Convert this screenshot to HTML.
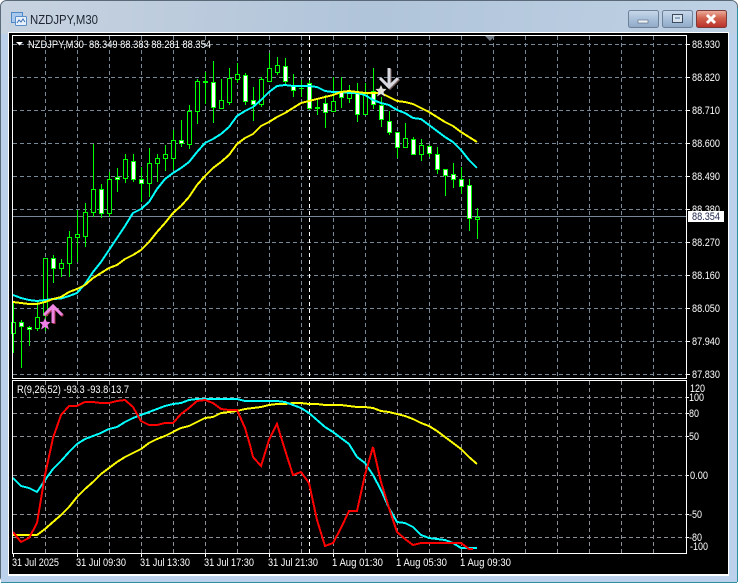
<!DOCTYPE html>
<html><head><meta charset="utf-8"><title>NZDJPY,M30</title>
<style>
html,body{margin:0;padding:0;width:739px;height:584px;overflow:hidden;background:#fff}
svg{display:block;position:absolute;left:0;top:0}
text{font-family:"Liberation Sans",sans-serif;font-size:11px;fill:#fff}
.t{font-size:13px;fill:#1c2530}
</style></head><body>
<svg width="739" height="584" viewBox="0 0 739 584" xmlns="http://www.w3.org/2000/svg">
<defs>
<linearGradient id="tb" x1="0" y1="0" x2="1" y2="0.08"><stop offset="0" stop-color="#c8d3e0"/><stop offset=".5" stop-color="#b0c4da"/><stop offset="1" stop-color="#bfd1e4"/></linearGradient>
<linearGradient id="b1" x1="0" y1="0" x2="0" y2="1"><stop offset="0" stop-color="#c9d8ea"/><stop offset=".5" stop-color="#a9c0da"/><stop offset="1" stop-color="#8fa9c6"/></linearGradient>
<linearGradient id="b2" x1="0" y1="0" x2="0" y2="1"><stop offset="0" stop-color="#ecb0a0"/><stop offset=".45" stop-color="#d2624e"/><stop offset="1" stop-color="#b8302a"/></linearGradient>
</defs>
<!-- window frame -->
<rect x="0.5" y="0.5" width="737" height="582" rx="6" fill="url(#tb)" stroke="#5a6a78"/>
<rect x="1" y="34" width="736" height="548" fill="#bcd2ec"/>
<path d="M0.5 6V578" stroke="#5a6a78"/>
<path d="M1 582.5H737M737.5 8V582" stroke="#2f8ea0" fill="none"/>
<!-- client -->
<rect x="8" y="32" width="721" height="544" fill="#fff"/>
<rect x="9" y="33" width="719" height="541" fill="#000"/>
<!-- icon -->
<rect x="11.5" y="12.5" width="11" height="10" fill="#a9c8ee" stroke="#4f86c6"/>
<rect x="15.5" y="16.5" width="11" height="9" rx="1" fill="#e8f1fb" stroke="#5a8ec8"/>
<path d="M17 23l2-3 2 2 2-3 2 3" stroke="#3a6eb0" fill="none"/>
<text class="t" x="30" y="24" textLength="68" lengthAdjust="spacingAndGlyphs">NZDJPY,M30</text>
<!-- buttons -->
<rect x="628.5" y="10.5" width="30" height="17" rx="2" fill="url(#b1)" stroke="#6d8199"/>
<rect x="638" y="20" width="10" height="3" fill="#eef2f6" stroke="#56677c" stroke-width=".6"/>
<rect x="662.5" y="10.5" width="30" height="17" rx="2" fill="url(#b1)" stroke="#6d8199"/>
<rect x="672.5" y="14.5" width="10" height="8" fill="#d9e3ee" stroke="#3c4c60" stroke-width="1"/>
<rect x="675" y="17" width="5" height="2" fill="#8ea7c2"/>
<rect x="696.5" y="10.5" width="30" height="17" rx="2" fill="url(#b2)" stroke="#7c3a38"/>
<path d="M707 15l8 8M715 15l-8 8" stroke="#fff" stroke-width="3"/>
<!-- grid main -->
<g stroke="#778899" fill="none" stroke-dasharray="4 3" shape-rendering="crispEdges">
<path d="M13 44.5H686M13 77.5H686M13 110.5H686M13 143.5H686M13 176.5H686M13 209.5H686M13 242.5H686M13 275.5H686M13 308.5H686M13 341.5H686M13 374.5H686"/>
<path d="M45.5 36V378M77.5 36V378M109.5 36V378M141.5 36V378M173.5 36V378M205.5 36V378M237.5 36V378M269.5 36V378M333.5 36V378M365.5 36V378M397.5 36V378M429.5 36V378M461.5 36V378M493.5 36V378M525.5 36V378M557.5 36V378M589.5 36V378M621.5 36V378M653.5 36V378M301.5 36V378"/>
<path d="M309.5 36V378" stroke="#fff"/>
</g>
<path d="M13 216.5H686" stroke="#778899" shape-rendering="crispEdges"/>
<!-- wicks -->
<path shape-rendering="crispEdges" fill="none" stroke="#00ff00" d="M13.5 302V353M21.5 320V368M29.5 326V346M37.5 300V331M45.5 258V331M53.5 255V283M61.5 259V277M69.5 231V277M77.5 210V262M85.5 203V247M93.5 144V217M101.5 184V218M109.5 172V217M117.5 168V192M125.5 154V183M133.5 154V182M141.5 167V202M149.5 148V197M157.5 154V182M165.5 145V171M173.5 130V170M181.5 120V147M189.5 105V149M197.5 79V124M205.5 72V104M213.5 61V123M221.5 79V108M229.5 68V105M237.5 63V83M245.5 73V105M253.5 87V121M261.5 77V107M269.5 53V82M277.5 57V75M285.5 58V84M293.5 74V97M301.5 80V97M309.5 80V110M317.5 100V115M325.5 95V128M333.5 77V112M341.5 77V108M349.5 85V103M357.5 83V122M365.5 83V115M373.5 68V109M381.5 97V127M389.5 111V135M397.5 132V158M405.5 123V147M413.5 137V155M421.5 139V161M429.5 145V157M437.5 147V174M445.5 169V196M453.5 163V188M461.5 167V194M469.5 179V231M477.5 208V239"/>
<!-- hollow bodies -->
<g fill="#000" stroke="#00ff00" shape-rendering="crispEdges">
<rect x="11.5" y="322.5" width="4" height="11"/><rect x="35.5" y="317.5" width="4" height="11"/><rect x="43.5" y="258.5" width="4" height="57"/><rect x="59.5" y="263.5" width="4" height="5"/><rect x="67.5" y="237.5" width="4" height="26"/><rect x="75.5" y="234.5" width="4" height="3"/><rect x="83.5" y="212.5" width="4" height="24"/><rect x="91.5" y="189.5" width="4" height="23"/><rect x="107.5" y="179.5" width="4" height="34"/><rect x="123.5" y="159.5" width="4" height="19"/><rect x="147.5" y="163.5" width="4" height="20"/><rect x="155.5" y="158.5" width="4" height="5"/><rect x="163.5" y="154.5" width="4" height="4"/><rect x="171.5" y="140.5" width="4" height="18"/><rect x="187.5" y="111.5" width="4" height="33"/><rect x="195.5" y="81.5" width="4" height="30"/><rect x="219.5" y="100.5" width="4" height="8"/><rect x="227.5" y="78.5" width="4" height="24"/><rect x="235.5" y="74.5" width="4" height="5"/><rect x="259.5" y="79.5" width="4" height="25"/><rect x="267.5" y="68.5" width="4" height="13"/><rect x="275.5" y="65.5" width="4" height="7"/><rect x="331.5" y="101.5" width="4" height="10"/><rect x="347.5" y="92.5" width="4" height="6"/><rect x="363.5" y="92.5" width="4" height="22"/><rect x="403.5" y="138.5" width="4" height="9"/><rect x="419.5" y="145.5" width="4" height="9"/><rect x="475.5" y="217.5" width="4" height="2"/>
</g>
<!-- doji -->
<path shape-rendering="crispEdges" stroke="#00ff00" fill="none" d="M203 81.5h5M203 82.5h5M299 88.5h5M315 107.5h5M315 108.5h5"/>
<!-- white bodies -->
<g fill="#fff" stroke="#00ff00" shape-rendering="crispEdges">
<rect x="19.5" y="322.5" width="4" height="4"/><rect x="27.5" y="327.5" width="4" height="2"/><rect x="51.5" y="258.5" width="4" height="10"/><rect x="99.5" y="189.5" width="4" height="24"/><rect x="115.5" y="177.5" width="4" height="2"/><rect x="131.5" y="161.5" width="4" height="18"/><rect x="139.5" y="179.5" width="4" height="4"/><rect x="179.5" y="140.5" width="4" height="3"/><rect x="211.5" y="82.5" width="4" height="25"/><rect x="243.5" y="75.5" width="4" height="26"/><rect x="251.5" y="100.5" width="4" height="4"/><rect x="283.5" y="66.5" width="4" height="15"/><rect x="291.5" y="86.5" width="4" height="4"/><rect x="307.5" y="83.5" width="4" height="25"/><rect x="323.5" y="103.5" width="4" height="9"/><rect x="339.5" y="92.5" width="4" height="5"/><rect x="355.5" y="92.5" width="4" height="22"/><rect x="371.5" y="91.5" width="4" height="13"/><rect x="379.5" y="105.5" width="4" height="14"/><rect x="387.5" y="121.5" width="4" height="11"/><rect x="395.5" y="132.5" width="4" height="15"/><rect x="411.5" y="139.5" width="4" height="15"/><rect x="427.5" y="146.5" width="4" height="7"/><rect x="435.5" y="154.5" width="4" height="15"/><rect x="443.5" y="169.5" width="4" height="6"/><rect x="451.5" y="174.5" width="4" height="5"/><rect x="459.5" y="179.5" width="4" height="7"/><rect x="467.5" y="185.5" width="4" height="33"/>
</g>
<!-- MAs -->
<polyline shape-rendering="crispEdges" fill="none" stroke="#00ffff" stroke-width="2" points="13,295 21,298 29,300 37,301 45,300 53,299 61,298.5 69,296 77,293 85,284 93,272 101,262 109,250 117,238 125,226 133,213 141,209 149,202 157,189 165,179 173,173 181,168 189,162 197,152 205,143 213,139 221,134 229,127 237,116 245,111 253,107 261,100 269,92 277,86 285,85 293,86 301,86 309,86 317,87 325,91 333,92 341,92 349,93 357,93 365,95 373,100 381,103 389,105 397,110 405,113 413,118 421,119 429,125 437,131 445,137 453,142 461,150 469,160 477,168"/>
<polyline shape-rendering="crispEdges" fill="none" stroke="#ffff00" stroke-width="2" points="13,302 21,303 29,304 37,304 45,302 53,299 61,297 69,292 77,289 85,285 93,278 101,273 109,268 117,265 125,259 133,255 141,250 149,242 157,232 165,223 173,213 181,206 189,197 197,185 205,176 213,168 221,162 229,155 237,144 245,138 253,134 261,126 269,122 277,117 285,113 293,108 301,103 309,101 317,99 325,97 333,95 341,92 349,91 357,92 365,93 373,93 381,93 389,97 397,101 405,102 413,104 421,108 429,112 437,117 445,122 453,126 461,132 469,137 477,142"/>
<!-- arrows & stars -->
<polygon points="45,318 46.7,321.8 50.5,322 47.5,325 49,329.5 45,327 41,329.5 42.5,325 39.5,322 43.3,321.8" fill="#ee7fe6"/>
<path d="M54 324V307M45 316L54 307L63 316" fill="none" stroke="#a8344f" stroke-width="3"/>
<path d="M53 323V306M44 315L53 306L62 315" fill="none" stroke="#ec86e2" stroke-width="3"/>
<polygon points="381,85 382.7,88.8 386.5,89 383.5,92 385,96.5 381,94 377,96.5 378.5,92 375.5,89 379.3,88.8" fill="#e0dcd8"/>
<path d="M390 69V87M381 79L390 88L399 79" fill="none" stroke="#7a6060" stroke-width="3"/>
<path d="M389 68V86M380 78L389 87L398 78" fill="none" stroke="#d8d8e0" stroke-width="3"/>
<!-- main chart border -->
<rect x="12.5" y="35.5" width="674" height="343" fill="none" stroke="#fff" shape-rendering="crispEdges"/>
<path d="M485 36h10l-5 5z" fill="#6f7a85"/>
<path d="M16 42h7l-3.5 3.5z" fill="#fff"/>
<text x="28" y="48" xml:space="preserve" textLength="183" lengthAdjust="spacingAndGlyphs">NZDJPY,M30  88.349 88.383 88.281 88.354</text>
<!-- right labels -->
<path stroke="#fff" shape-rendering="crispEdges" d="M687 44.5h3M687 77.5h3M687 110.5h3M687 143.5h3M687 176.5h3M687 209.5h3M687 242.5h3M687 275.5h3M687 308.5h3M687 341.5h3M687 374.5h3"/>
<text x="692" y="48" textLength="28" lengthAdjust="spacingAndGlyphs">88.930</text>
<text x="692" y="81" textLength="28" lengthAdjust="spacingAndGlyphs">88.820</text>
<text x="692" y="114" textLength="28" lengthAdjust="spacingAndGlyphs">88.710</text>
<text x="692" y="147" textLength="28" lengthAdjust="spacingAndGlyphs">88.600</text>
<text x="692" y="180" textLength="28" lengthAdjust="spacingAndGlyphs">88.490</text>
<text x="692" y="213" textLength="28" lengthAdjust="spacingAndGlyphs">88.380</text>
<text x="692" y="246" textLength="28" lengthAdjust="spacingAndGlyphs">88.270</text>
<text x="692" y="279" textLength="28" lengthAdjust="spacingAndGlyphs">88.160</text>
<text x="692" y="312" textLength="28" lengthAdjust="spacingAndGlyphs">88.050</text>
<text x="692" y="345" textLength="28" lengthAdjust="spacingAndGlyphs">87.940</text>
<text x="692" y="378" textLength="28" lengthAdjust="spacingAndGlyphs">87.830</text>
<rect x="688" y="211" width="36" height="11" fill="#fff"/>
<text x="692" y="220" textLength="28" lengthAdjust="spacingAndGlyphs" style="fill:#222a50">88.354</text>
<!-- sub grid -->
<g stroke="#8b8f98" fill="none" stroke-dasharray="4 3" shape-rendering="crispEdges">
<path d="M13 397.5H686M13 413.5H686M13 436.5H686M13 475.5H686M13 514.5H686M13 537.5H686"/>
<path d="M45.5 381V553M77.5 381V553M109.5 381V553M141.5 381V553M173.5 381V553M205.5 381V553M237.5 381V553M269.5 381V553M301.5 381V553M333.5 381V553M365.5 381V553M397.5 381V553M429.5 381V553M461.5 381V553M493.5 381V553M525.5 381V553M557.5 381V553M589.5 381V553M621.5 381V553M653.5 381V553"/>
<path d="M309.5 381V553" stroke="#fff"/>
</g>
<!-- sub lines -->
<polyline shape-rendering="crispEdges" fill="none" stroke="#ffff00" stroke-width="2" points="13,535 37,535 45,529 53,522 61,515 69,507 77,497 85,489 93,482 101,474 109,468 117,462 125,457 133,453 141,449 149,443 157,439 165,436 173,432 181,428 189,426 197,422 205,418 213,417 221,413 229,412 237,411 245,409 253,408 261,407 269,405 277,404 285,404 293,403 301,403 309,404 317,404 325,405 341,405 349,406 357,407 365,407 373,408 381,411 389,412 397,414 405,416 413,419 421,423 429,426 437,431 445,437 453,443 461,449 469,457 477,464"/>
<polyline shape-rendering="crispEdges" fill="none" stroke="#00ffff" stroke-width="2" points="13,478 21,486 29,488 37,492 45,480 53,469 61,461 69,452 77,444 85,439 93,436 101,433 109,429 117,427 125,422 133,418 141,415 149,412 157,409 165,406 173,404 181,403 189,400 197,399 205,399 237,399 245,401 261,401 277,401 285,402 293,405 301,408 309,413 317,420 325,427 333,432 341,438 349,444 357,457 365,463 373,475 381,490 389,508 397,522 405,523 413,527 421,535 429,538 437,539 445,540 453,543 461,548 477,548"/>
<polyline shape-rendering="crispEdges" fill="none" stroke="#ff0000" stroke-width="2" points="13,532 21,542 29,538 37,523 45,475 53,438 61,415 69,406 77,406 85,402 93,402 101,403 109,403 117,401 125,400 133,407 141,421 149,425 157,425 165,423 173,423 181,414 189,408 197,401 205,400 213,403 221,409 229,410 237,410 245,428 250,445 253,457 261,466 269,440 277,424 285,450 293,475 301,472 309,483 317,520 325,546 333,543 341,528 349,511 357,511 365,475 373,447 381,482 389,508 397,532 405,539 413,545 421,543 461,543 469,549 473,549"/>
<!-- sub border -->
<rect x="12.5" y="380.5" width="674" height="173" fill="none" stroke="#fff" shape-rendering="crispEdges"/>
<text x="17" y="393" textLength="112" lengthAdjust="spacingAndGlyphs">R(9,26,52) -93.3 -93.8 13.7</text>
<path stroke="#fff" shape-rendering="crispEdges" d="M687 397.5h2M687 413.5h2M687 436.5h2M687 475.5h2M687 514.5h2M687 537.5h2M13.5 554v3M77.5 554v3M141.5 554v3M205.5 554v3M269.5 554v3M333.5 554v3M397.5 554v3M461.5 554v3"/>
<text x="690" y="392" textLength="15" lengthAdjust="spacingAndGlyphs">120</text>
<text x="689" y="401" textLength="15" lengthAdjust="spacingAndGlyphs">100</text>
<text x="689" y="417" textLength="10" lengthAdjust="spacingAndGlyphs">80</text>
<text x="689" y="440" textLength="10" lengthAdjust="spacingAndGlyphs">50</text>
<text x="690" y="479" textLength="18" lengthAdjust="spacingAndGlyphs">0.00</text>
<text x="689" y="518" textLength="13" lengthAdjust="spacingAndGlyphs">-50</text>
<text x="689" y="541" textLength="13" lengthAdjust="spacingAndGlyphs">-80</text>
<text x="690" y="550" textLength="18" lengthAdjust="spacingAndGlyphs">-100</text>
<!-- time labels -->
<text x="12" y="566" textLength="47" lengthAdjust="spacingAndGlyphs">31 Jul 2025</text>
<text x="76" y="566" textLength="50" lengthAdjust="spacingAndGlyphs">31 Jul 09:30</text>
<text x="140" y="566" textLength="50" lengthAdjust="spacingAndGlyphs">31 Jul 13:30</text>
<text x="204" y="566" textLength="50" lengthAdjust="spacingAndGlyphs">31 Jul 17:30</text>
<text x="268" y="566" textLength="50" lengthAdjust="spacingAndGlyphs">31 Jul 21:30</text>
<text x="332" y="566" textLength="51" lengthAdjust="spacingAndGlyphs">1 Aug 01:30</text>
<text x="396" y="566" textLength="51" lengthAdjust="spacingAndGlyphs">1 Aug 05:30</text>
<text x="460" y="566" textLength="51" lengthAdjust="spacingAndGlyphs">1 Aug 09:30</text>
</svg>
</body></html>
